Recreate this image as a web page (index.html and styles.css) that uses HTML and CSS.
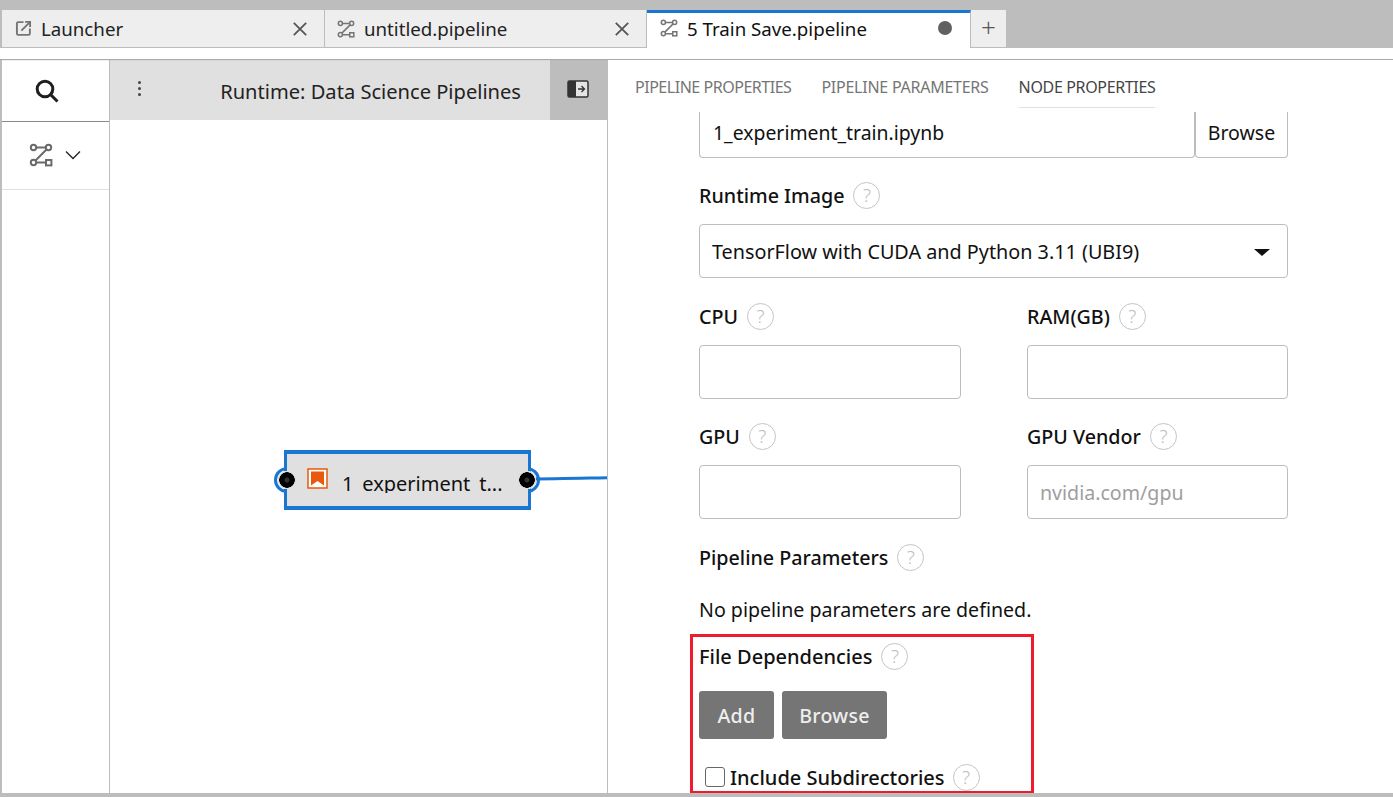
FILE: index.html
```html
<!DOCTYPE html>
<html lang="en">
<head>
<meta charset="utf-8">
<title>5 Train Save.pipeline</title>
<link rel="stylesheet" href="styles.css">
</head>
<body>
<svg class="defs" width="0" height="0" aria-hidden="true">
  <symbol id="pipe" viewBox="0 0 24 24">
    <g fill="none" stroke="currentColor" stroke-width="2">
      <circle cx="4.5" cy="4.5" r="2.7"/><circle cx="19.5" cy="4.5" r="2.7"/><circle cx="4.5" cy="19.5" r="2.7"/>
      <rect x="17" y="17" width="5.4" height="5.4"/>
      <path d="M7.2 4.5h9.6M17.5 6.5 6.5 17.5M7.2 19.5H17"/>
    </g>
  </symbol>
  <symbol id="close" viewBox="0 0 16 16">
    <path d="M2.5 2.5l11 11M13.5 2.5l-11 11" fill="none" stroke="currentColor" stroke-width="1.6"/>
  </symbol>
</svg>
<header class="tabbar">
  <div class="tab tab-first">
    <svg class="tab-ico" viewBox="0 0 16 16"><path d="M8 2H3a1.2 1.2 0 0 0-1.200 1.200v9.600A1.200 1.200 0 0 0 3 14h9.800a1.200 1.200 0 0 0 1.200-1.200V8" fill="none" stroke="#757575" stroke-width="1.800"/><path d="M6 10l7.500-7.500M9.500 1.800h4.700v4.700" fill="none" stroke="#757575" stroke-width="1.800"/></svg>
    <span class="tab-label">Launcher</span>
    <svg class="tab-close"><use href="#close"/></svg>
  </div>
  <div class="tab tab-second">
    <svg class="tab-ico pipe-ico"><use href="#pipe"/></svg>
    <span class="tab-label">untitled.pipeline</span>
    <svg class="tab-close"><use href="#close"/></svg>
  </div>
  <div class="tab tab-active">
    <svg class="tab-ico pipe-ico"><use href="#pipe"/></svg>
    <span class="tab-label">5 Train Save.pipeline</span>
    <span class="dirty"></span>
  </div>
  <div class="tab-add">+</div>
</header>
<div class="strip"></div>
<main class="workspace">
  <aside class="palette">
    <div class="pal-search">
      <svg width="26" height="26" viewBox="0 0 26 26"><circle cx="11" cy="11" r="7.800" fill="none" stroke="#1f1f1f" stroke-width="3"/><path d="M16.500 16.500l7 7" stroke="#1f1f1f" stroke-width="3"/></svg>
    </div>
    <div class="pal-cat">
      <svg class="pal-pipe"><use href="#pipe"/></svg>
      <svg class="pal-chev" viewBox="0 0 16 10"><path d="M1 1.500l7 7 7-7" fill="none" stroke="#222" stroke-width="1.300"/></svg>
    </div>
  </aside>
  <section class="canvas">
    <div class="toolbar">
      <div class="kebab"><i></i><i></i><i></i></div>
      <div class="runtime">Runtime: Data Science Pipelines</div>
      <div class="panel-toggle">
        <svg width="22" height="18" viewBox="0 0 22 18"><rect x="1" y="1" width="20" height="16" rx="1.500" fill="#e4e4e4" stroke="#333" stroke-width="1.500"/><path d="M1 2.500a1.500 1.500 0 0 1 1.500-1.500H9v16H2.500A1.500 1.500 0 0 1 1 15.500z" fill="#333"/><path d="M11 9h6M14.500 6l3 3-3 3" fill="none" stroke="#333" stroke-width="1.300"/></svg>
      </div>
    </div>
    <div class="flow">
      <svg class="link" width="90" height="20" viewBox="0 0 90 20"><path d="M0 11C30 10.800 60 10 90 9.500" fill="none" stroke="#1976d2" stroke-width="3"/></svg>
      <div class="node">
        <span class="port port-in"></span>
        <svg class="node-ico" width="21" height="21" viewBox="0 0 21 21"><rect x="1" y="1" width="19" height="19" fill="#fff" stroke="#e8590c" stroke-width="1.500"/><path d="M4 3.500h13v14l-6.500-4.500L4 17.500z" fill="#e8590c"/></svg>
        <span class="node-label">1_experiment_t...</span>
        <span class="port port-out"></span>
      </div>
    </div>
  </section>
  <section class="props">
    <nav class="prop-tabs">
      <span class="prop-tab prop-tab-a">PIPELINE PROPERTIES</span>
      <span class="prop-tab prop-tab-b">PIPELINE PARAMETERS</span>
      <span class="prop-tab prop-tab-on">NODE PROPERTIES</span>
    </nav>
    <div class="form">
      <div class="file-row">
        <div class="input file-input">1_experiment_train.ipynb</div>
        <div class="browse-mini">Browse</div>
      </div>
      <div class="label label-runtime">Runtime Image <span class="help">?</span></div>
      <div class="input select">TensorFlow with CUDA and Python 3.11 (UBI9)<span class="caret"></span></div>
      <div class="grid">
        <div class="cell">
          <div class="label">CPU <span class="help">?</span></div>
          <div class="input"></div>
        </div>
        <div class="cell">
          <div class="label">RAM(GB) <span class="help">?</span></div>
          <div class="input"></div>
        </div>
        <div class="cell">
          <div class="label">GPU <span class="help">?</span></div>
          <div class="input"></div>
        </div>
        <div class="cell">
          <div class="label">GPU Vendor <span class="help">?</span></div>
          <div class="input placeholder">nvidia.com/gpu</div>
        </div>
      </div>
      <div class="label label-params">Pipeline Parameters <span class="help">?</span></div>
      <p class="none">No pipeline parameters are defined.</p>
      <div class="deps">
        <div class="label">File Dependencies <span class="help">?</span></div>
        <div class="btns"><span class="btn btn-add">Add</span><span class="btn btn-browse">Browse</span></div>
        <div class="label check-row"><span class="check"></span>Include Subdirectories <span class="help">?</span></div>
      </div>
    </div>
  </section>
</main>
</body>
</html>
```

FILE: styles.css
```css
* { box-sizing: border-box; }
html, body { margin: 0; height: 100%; }
body {
  width: 1393px;
  height: 797px;
  overflow: hidden;
  background: #bdbdbd;
  font-family: "Noto Sans", "Open Sans", sans-serif;
  color: #111;
  padding: 10px 0 4px 2px;
  display: flex;
  flex-direction: column;
}
.defs { position: absolute; }

.tabbar { display: flex; height: 38px; flex: none; }
.tab {
  display: flex;
  align-items: center;
  background: #eeeeee;
  border-right: 1px solid #bdbdbd;
  border-bottom: 1px solid #bdbdbd;
  font-size: 18.7px;
  padding: 0 15px 0 13px;
  color: #222;
}
.tab-first { width: 323px; }
.tab-second { width: 322px; padding-left: 12px; }
.tab-active {
  width: 324px;
  background: #fff;
  border-top: 3px solid #1976d2;
  border-bottom: none;
  padding-left: 13px;
  padding-right: 18px;
  padding-bottom: 5px;
  color: #111;
}
.tab-ico { width: 17px; height: 17px; margin-right: 9px; flex: none; }
.pipe-ico { color: #757575; width: 18px; height: 18px; margin-right: 9px; }
.tab-label { flex: 1; }
.tab-close { width: 18px; height: 18px; color: #555; flex: none; }
.dirty { width: 14px; height: 14px; border-radius: 50%; background: #616161; }
.tab-add {
  width: 35px;
  background: #eeeeee;
  border-bottom: 1px solid #bdbdbd;
  text-align: center;
  font-size: 26px;
  line-height: 35px;
  font-weight: 300;
  color: #555;
}

.strip { height: 11px; flex: none; background: #fff; margin-left: -2px; box-shadow: 0 1px 1px #aaa; position: relative; }

.workspace { flex: 1; display: flex; min-height: 0; margin-top: 1px; background: #fff; }

.palette { width: 108px; flex: none; background: #fff; border-right: 1px solid #bdbdbd; }
.pal-search {
  height: 62px;
  border-bottom: 1px solid #8a8a8a;
  display: flex;
  align-items: center;
  justify-content: center;
  padding-right: 17px;
}
.pal-cat {
  height: 68px;
  border-bottom: 1px solid #e0e0e0;
  display: flex;
  align-items: center;
  justify-content: center;
  gap: 12px;
  padding-bottom: 1px;
  padding-right: 2px;
}
.pal-pipe { width: 24px; height: 24px; color: #6a6a6a; }
.pal-chev { width: 16px; height: 10px; }

.canvas { width: 498px; flex: none; border-right: 1px solid #bdbdbd; display: flex; flex-direction: column; }
.toolbar { height: 60px; background: #e0e0e0; display: flex; align-items: center; flex: none; }
.kebab { width: 58px; display: flex; flex-direction: column; align-items: center; gap: 3px; padding-bottom: 3px; }
.kebab i { width: 3px; height: 3px; border-radius: 50%; background: #444; display: block; }
.runtime { flex: 1; font-size: 20.1px; color: #222; text-align: right; padding-right: 29px; padding-top: 2px; }
.panel-toggle {
  width: 57px;
  height: 60px;
  background: #bdbdbd;
  display: flex;
  align-items: center;
  justify-content: center;
  padding-bottom: 3px;
  padding-right: 2px;
}
.flow { position: relative; flex: 1; overflow: hidden; }
.link { position: absolute; left: 420px; top: 348px; }
.node {
  position: absolute;
  left: 174px;
  top: 330px;
  width: 247px;
  height: 60px;
  background: #e0e0e0;
  border: 4px solid #1976d2;
  border-left-width: 3px;
  border-right-width: 3px;
  display: flex;
  align-items: center;
  padding-left: 20px;
}
.node-ico { margin-top: -3px; flex: none; }
.node-label { font-size: 20px; line-height: 24px; height: 21px; overflow: hidden; margin-left: 14px; margin-top: 5px; color: #111; white-space: nowrap; }
.port {
  position: absolute;
  top: 14px;
  width: 24px;
  height: 24px;
  border-radius: 50%;
  background: radial-gradient(circle, #333 0 2px, #000 3px 7.500px, #ddd 8px 9px, transparent 9.500px);
}
.port::before {
  content: "";
  position: absolute;
  inset: -1px;
  border-radius: 50%;
  border: 3px solid #1976d2;
}
.port-in { left: -12px; }
.port-in::before { clip-path: inset(0 60% 0 0); }
.port-out { right: -11px; }
.port-out::before { clip-path: inset(0 0 0 60%); }

.props { flex: 1; min-width: 0; position: relative; overflow: hidden; display: flex; flex-direction: column; }
.prop-tabs { height: 52px; flex: none; display: flex; gap: 30px; padding: 17px 0 0 27px; font-size: 16px; color: #757575; background: #fff; letter-spacing: -0.35px; }
.prop-tab { height: 31px; line-height: 20px; }
.prop-tab-a { letter-spacing: -0.47px; }
.prop-tab-b { letter-spacing: -0.25px; }
.prop-tab-on { color: #444; border-bottom: 1px solid #e0e0e0; }
.form { padding: 0 105px 0 91px; flex: 1; position: relative; }

.input {
  height: 54px;
  border: 1px solid #bdbdbd;
  border-radius: 4px;
  font-size: 19.8px;
  padding: 0 12px;
  display: flex;
  align-items: center;
  color: #111;
  background: #fff;
}
.file-row { display: flex; height: 46px; }
.file-input { flex: 1; height: 46px; font-size: 19.4px; border-top: none; border-radius: 0 0 4px 4px; padding-bottom: 4px; padding-left: 13px; }
.browse-mini {
  width: 93px;
  height: 46px;
  border: 1px solid #bdbdbd;
  border-top: none;
  border-radius: 0 0 4px 4px;
  font-size: 19.5px;
  display: flex;
  align-items: center;
  justify-content: center;
  padding-bottom: 4px;
}
.label { font-size: 19.7px; font-weight: 500; display: flex; align-items: center; gap: 9px; height: 28px; color: #111; }
.label-runtime { margin-top: 23px; margin-bottom: 15px; }
.help {
  width: 27px;
  height: 27px;
  border: 1px solid #c4c4c4;
  border-radius: 50%;
  display: inline-flex;
  align-items: center;
  justify-content: center;
  font-size: 19px;
  font-weight: 300;
  color: #bdbdbd;
  background: #fff;
}
.select { position: relative; }
.caret { position: absolute; right: 17px; top: 24px; width: 0; height: 0; border: 8px solid transparent; border-top: 7px solid #111; border-bottom: 0; }

.grid { display: grid; grid-template-columns: 262px 261px; column-gap: 66px; row-gap: 23px; margin-top: 24px; }
.cell .label { margin-bottom: 15px; }
.placeholder { color: #9e9e9e; font-size: 19.6px; }

.label-params { margin-top: 24px; }
.none { margin: 25px 0 0; font-size: 19.6px; line-height: 27px; }

.deps { position: absolute; left: 82px; top: 522px; width: 344px; height: 160px; border: 3px solid #ed1c2e; padding: 5px 0 0 6px; }
.deps .label { font-size: 20px; }
.btns { display: flex; gap: 8px; margin-top: 21px; }
.btn {
  height: 48px;
  background: #757575;
  border-radius: 3px;
  color: #eee;
  font-size: 19.6px;
  font-weight: 500;
  display: flex;
  align-items: center;
  justify-content: center;
  letter-spacing: 0.3px;
}
.btn-add { width: 75px; }
.btn-browse { width: 105px; }
.check-row { margin-top: 24px; gap: 8px; }
.check { width: 20px; height: 20px; border: 1.500px solid #666; border-radius: 3px; margin-left: 6px; margin-right: -3px; background: #fff; flex: none; }
```
